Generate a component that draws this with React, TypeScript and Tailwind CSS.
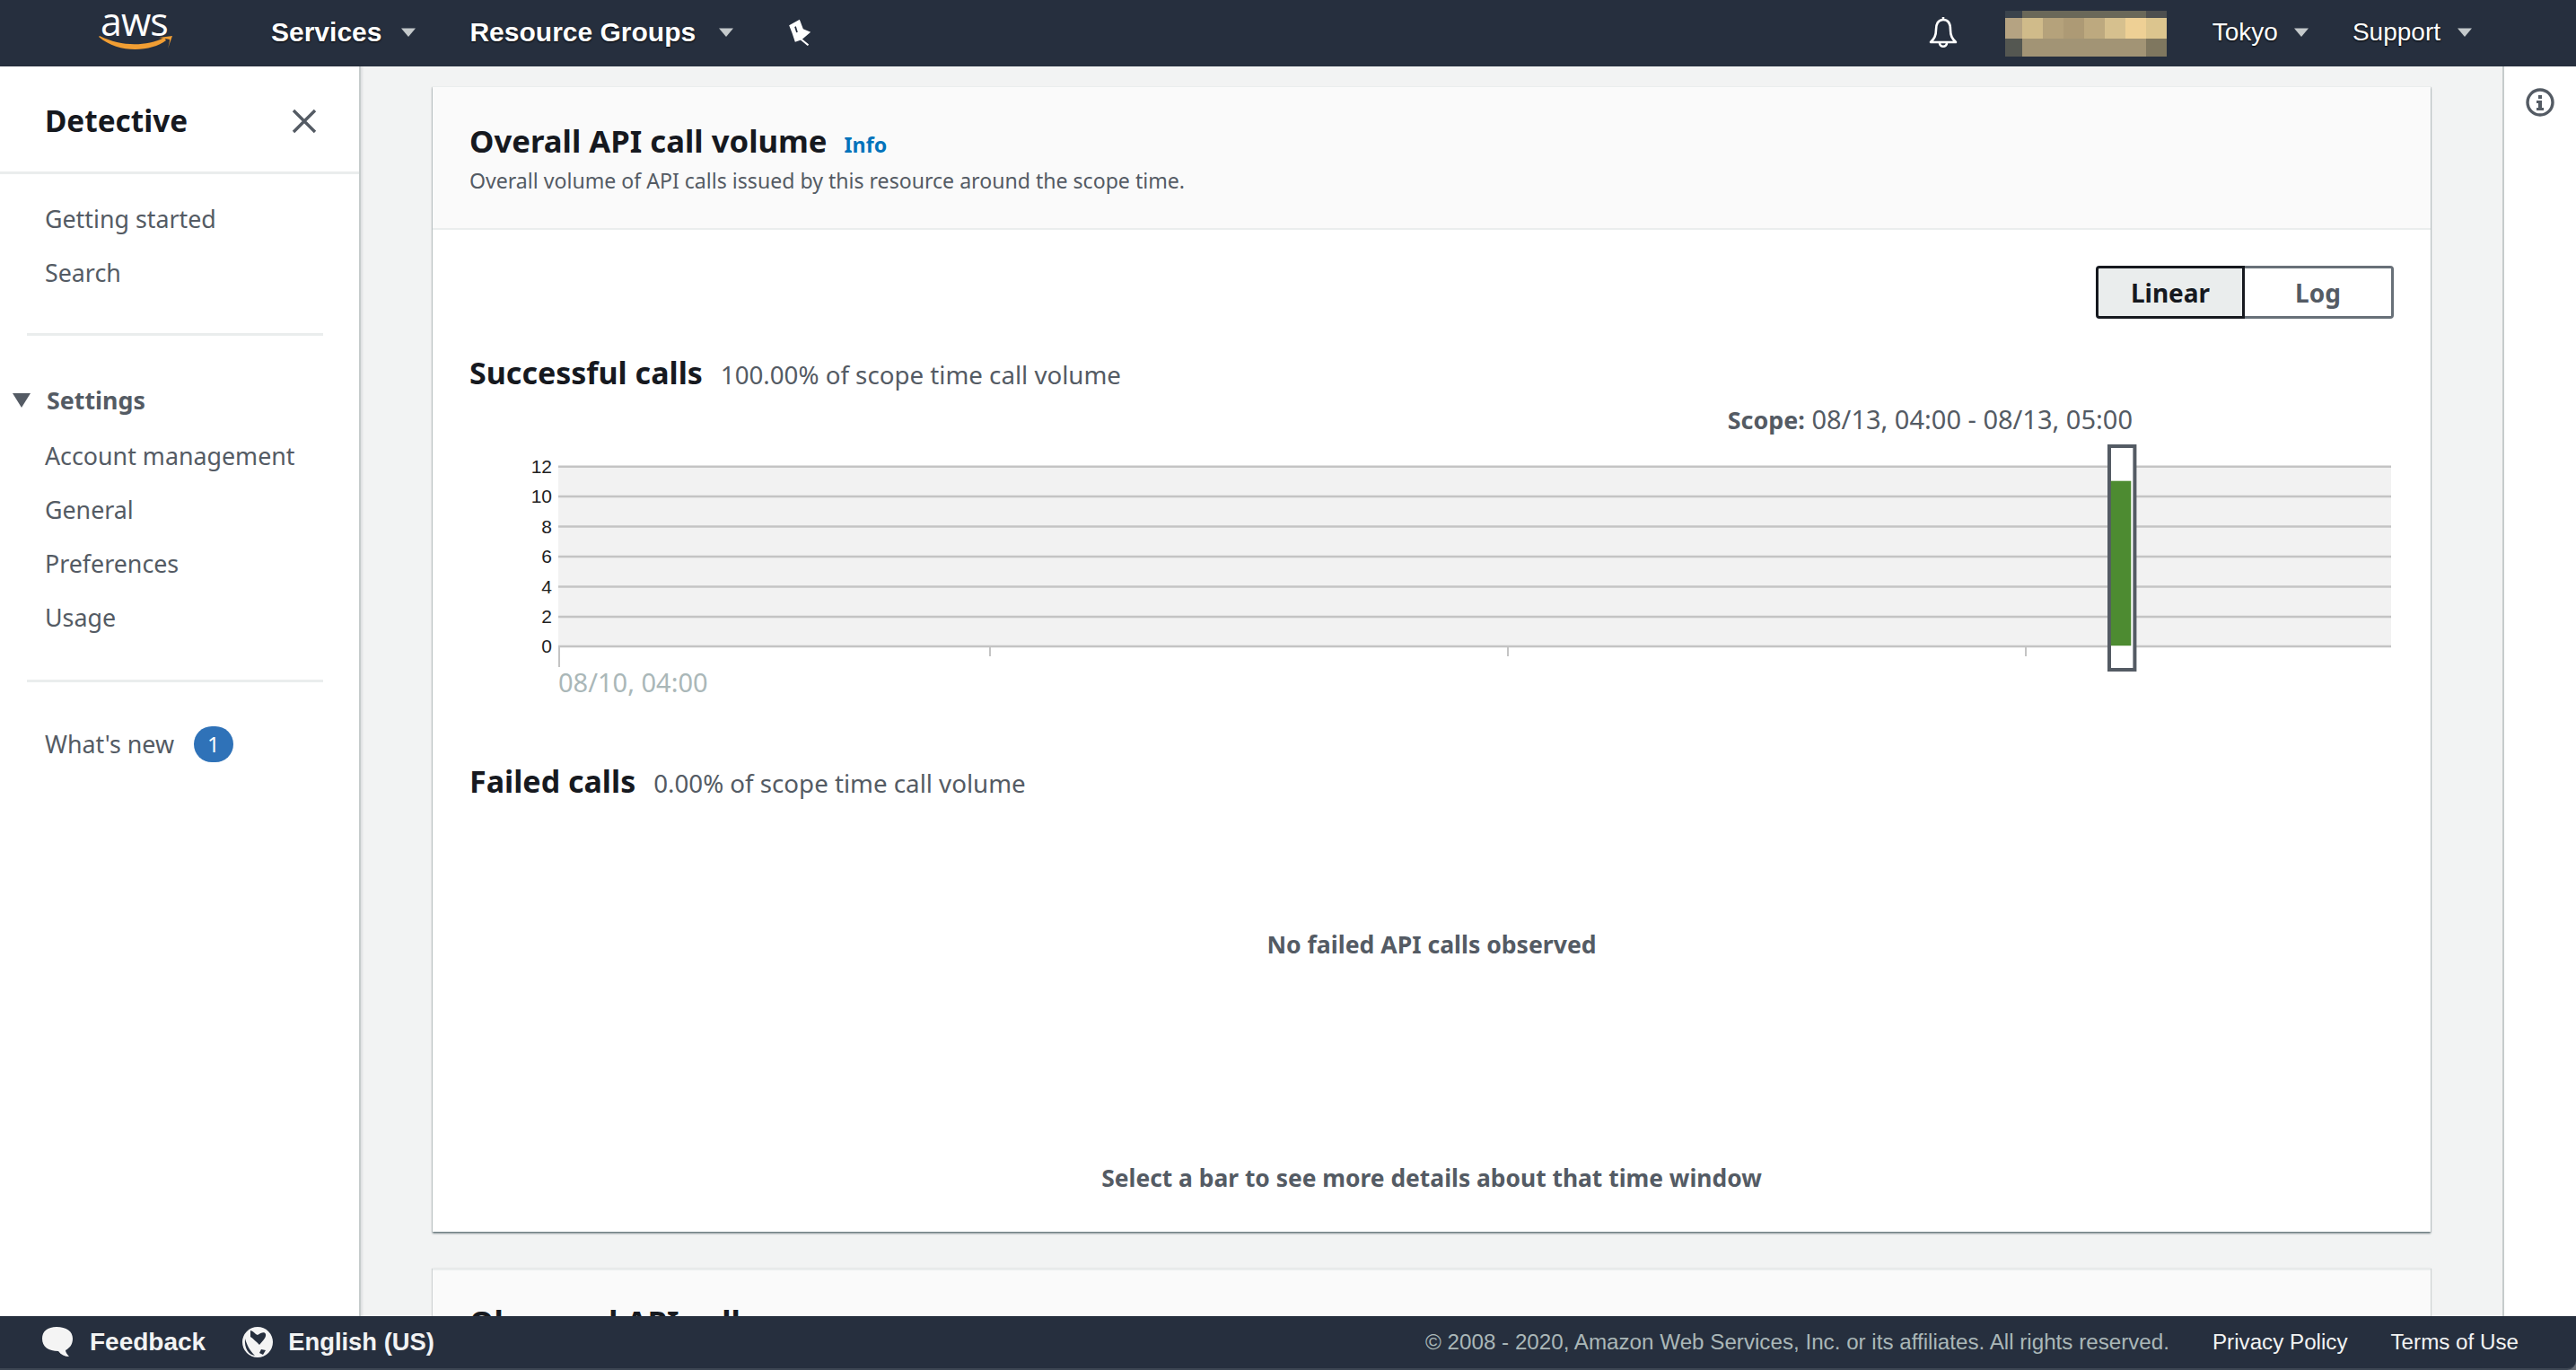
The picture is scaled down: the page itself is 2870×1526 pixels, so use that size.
const body = '"Noto Sans", sans-serif';
const head = '"Liberation Sans", Arial, sans-serif';

function Caret() {
  return (
    <svg width="18" height="12" viewBox="0 0 18 12" className="block">
      <path d="M1 1.5 H17 L9 11 Z" fill="#c4c9cb" />
    </svg>
  );
}

const mosaic = [
  ['#3a434c', '#6a6859', '#6a6859', '#6a6859', '#6a6859', '#6a6859', '#6a6859', '#4d4f4f'],
  ['#b5a382', '#d0bb8a', '#b5a27b', '#ad9a75', '#bda97f', '#d6c08e', '#eed095', '#dcc58e'],
  ['#545751', '#a29475', '#a29475', '#a29475', '#a29475', '#a29475', '#a29475', '#7f775f'],
];

function Mosaic() {
  const xs = [0, 19, 42, 65, 88, 111, 134, 157];
  const ws = [19, 23, 23, 23, 23, 23, 23, 23];
  const ys = [0, 8, 31];
  const hs = [8, 23, 20];
  return (
    <svg width="180" height="51" viewBox="0 0 180 51" className="block mt-[3px]">
      {mosaic.map((row, r) =>
        row.map((c, i) => <rect key={`${r}-${i}`} x={xs[i]} y={ys[r]} width={ws[i]} height={hs[r]} fill={c} />)
      )}
    </svg>
  );
}

function Header() {
  return (
    <header className="h-[74px] shrink-0 pb-[3px] bg-[#262f3e] flex items-center text-white text-[30px] font-bold relative" style={{ fontFamily: head }}>
      <div className="relative w-[84px] h-[60px] ml-[110px] mt-[3px]">
        <span className="absolute left-[2px] top-[-5px] text-[43px] font-normal leading-[44px] tracking-[-1px]" style={{ fontFamily: '"Open Sans", sans-serif' }}>aws</span>
        <svg width="84" height="18" viewBox="0 0 84 18" className="absolute left-0 top-[33px] overflow-visible">
          <path d="M0 1 C22 20 58 18 75 5 L73 2 C52 12 25 12 1 0 Z" fill="#f19e33" />
          <path d="M67 2 L82 0 L77 14 C78 10 79 7 79 4 C76 3 71 3 67 2 Z" fill="#f19e33" />
        </svg>
      </div>
      <span className="ml-[108px] [text-shadow:0_1px_2px_#000]">Services</span>
      <span className="ml-[21px]"><Caret /></span>
      <span className="ml-[59px] [text-shadow:0_1px_2px_#000]">Resource Groups</span>
      <span className="ml-[25px]"><Caret /></span>
      <svg width="27" height="30" viewBox="55 28 80 90" className="ml-[60px] block">
        <path fillRule="evenodd" d="M58 50 L93 30 L105 62 L130 72 L100 98 L78 105 L68 75 Z M76 55 L82 74 L87 72 L81 53 Z" fill="#fff" />
        <path d="M98 96 L122 116" stroke="#fff" strokeWidth="6" />
      </svg>
      <div className="flex-1" />
      <svg width="34" height="36" viewBox="0 0 34 36" className="block mr-[52px]">
        <path d="M17 4 C23 4 25 9 25 15 C25 22 27 25 31 29 H3 C7 25 9 22 9 15 C9 9 11 4 17 4 Z M17 1 V4 M13 30 C13 35 21 35 21 30" fill="none" stroke="#fff" strokeWidth="2.6" strokeLinejoin="round" />
      </svg>
      <Mosaic />
      <span className="ml-[51px] font-normal text-[28px] [text-shadow:0_1px_2px_#000]">Tokyo</span>
      <span className="ml-[17px]"><Caret /></span>
      <span className="ml-[48px] font-normal text-[28px] [text-shadow:0_1px_2px_#000]">Support</span>
      <span className="ml-[18px] mr-[115px]"><Caret /></span>
    </header>
  );
}

function NavItem({ children }: { children: React.ReactNode }) {
  return <div className="h-[60px] flex items-center pl-[50px] text-[26.8px] text-[#545b64]">{children}</div>;
}

function Sidebar() {
  return (
    <aside className="w-[402px] shrink-0 bg-white border-r-2 border-[#c6cccc] [box-shadow:2px_0_2px_rgba(0,28,36,0.08)] z-10">
      <div className="h-[120px] border-b-[3px] border-[#eaeded] pl-[50px] pr-[47px] pt-[4px] flex items-center justify-between">
        <span className="text-[33.3px] font-bold text-[#16191f]">Detective</span>
        <svg width="28" height="28" viewBox="0 0 28 28" className="block">
          <path d="M2 2 L26 26 M26 2 L2 26" stroke="#545b64" strokeWidth="3.4" />
        </svg>
      </div>
      <div className="pt-[20px]">
        <NavItem>Getting started</NavItem>
        <NavItem>Search</NavItem>
      </div>
      <div className="mt-[37px] mx-[30px] w-[330px] h-[3px] bg-[#eaeded]" />
      <div className="mt-[52px] h-[40px] flex items-center pl-[14px] text-[26.8px] font-bold text-[#545b64]">
        <svg width="20" height="16" viewBox="0 0 20 16" className="block mr-[18px]"><path d="M0 0 H20 L10 16 Z" fill="#545b64" /></svg>
        Settings
      </div>
      <div className="mt-[12px]">
        <NavItem>Account management</NavItem>
        <NavItem>General</NavItem>
        <NavItem>Preferences</NavItem>
        <NavItem>Usage</NavItem>
      </div>
      <div className="mt-[39px] mx-[30px] w-[330px] h-[3px] bg-[#eaeded]" />
      <div className="mt-[39px] h-[60px] flex items-center pl-[50px] text-[26.8px] text-[#545b64]">
        What's new
        <span className="ml-[22px] w-[44px] h-[40px] rounded-full bg-[#2f72b8] text-white text-[24px] flex items-center justify-center">1</span>
      </div>
    </aside>
  );
}

function Chart() {
  const ys = [28.7, 62, 95.5, 129, 162.5, 196, 229];
  const labels = ['12', '10', '8', '6', '4', '2', '0'];
  return (
    <svg width="2144" height="290" viewBox="0 0 2144 290" className="block mt-[3px]">
      <rect x="99" y="28" width="2042" height="201" fill="#f2f2f2" />
      {ys.map((y, i) => (
        <g key={y}>
          <line x1="99" x2="2141" y1={y} y2={y} stroke="#c4c4c4" strokeWidth="2.4" />
          <text x="92" y={y + 7} textAnchor="end" fontSize="21" fill="#222" style={{ fontFamily: head }}>{labels[i]}</text>
        </g>
      ))}
      <line x1="100" x2="100" y1="229" y2="252" stroke="#c4c4c4" strokeWidth="2" />
      {[580, 1157, 1734].map((x) => (
        <line key={x} x1={x} x2={x} y1="229" y2="240" stroke="#c4c4c4" strokeWidth="2" />
      ))}
      <rect x="1827" y="6" width="28.4" height="249" fill="#fff" stroke="#545b64" strokeWidth="4" />
      <rect x="1828.8" y="44.7" width="22.5" height="183.5" fill="#4d8b31" />
      <text x="99" y="280" fontSize="29" fill="#aab7b8" style={{ fontFamily: body }}>08/10, 04:00</text>
    </svg>
  );
}

function OverallCard() {
  return (
    <section className="bg-white [box-shadow:0_2px_2px_rgba(0,28,36,0.45),1px_1px_1px_rgba(0,28,36,0.1),-1px_1px_1px_rgba(0,28,36,0.1)] border-t border-[#eaeded]">
      <div className="h-[159px] bg-[#fafafa] border-b-2 border-[#eaeded] px-[41px] pt-[35px]">
        <div className="flex items-baseline">
          <h2 className="text-[34.7px] leading-[50px] font-bold text-[#16191f]">Overall API call volume</h2>
          <span className="ml-[19px] text-[23.2px] font-bold text-[#0073bb]">Info</span>
        </div>
        <p className="text-[23.1px] leading-[36px] text-[#545b64] mt-[1px]">Overall volume of API calls issued by this resource around the scope time.</p>
      </div>
      <div className="px-[41px] h-[1116px]">
        <div className="pt-[40px] flex justify-end text-[28px] font-bold">
          <div className="w-[166px] h-[59px] bg-[#eaeded] border-[3px] border-[#16191f] rounded-l-[4px] flex items-center justify-center text-[#16191f]">Linear</div>
          <div className="w-[166px] h-[59px] border-[3px] border-l-0 border-[#687078] rounded-r-[4px] flex items-center justify-center text-[#545b64]">Log</div>
        </div>
        <div className="mt-[36px] flex items-baseline">
          <h3 className="text-[34px] leading-[48px] font-bold text-[#16191f]">Successful calls</h3>
          <span className="ml-[20px] text-[27.7px] text-[#545b64]">100.00% of scope time call volume</span>
        </div>
        <div className="mt-[8px] pr-[291px] text-right text-[29px] leading-[40px] text-[#545b64]">
          <b className="text-[26.9px]">Scope:</b> 08/13, 04:00 - 08/13, 05:00
        </div>
        <Chart />
        <div className="mt-[65px] flex items-baseline">
          <h3 className="text-[34px] leading-[48px] font-bold text-[#16191f]">Failed calls</h3>
          <span className="ml-[20px] text-[27.7px] text-[#545b64]">0.00% of scope time call volume</span>
        </div>
        <div className="mt-[138px] text-center text-[26.6px] leading-[40px] font-bold text-[#545b64]">No failed API calls observed</div>
        <div className="mt-[220px] text-center text-[26.4px] leading-[40px] font-bold text-[#545b64]">Select a bar to see more details about that time window</div>
      </div>
    </section>
  );
}

function Footer() {
  return (
    <footer className="h-[60px] shrink-0 bg-[#262f3e] border-b-2 border-[#3d4653] rounded-br-[10px] flex items-center text-[28px] text-[#f2f3f3] z-20" style={{ fontFamily: head }}>
      <svg width="36" height="34" viewBox="0 0 36 34" className="block ml-[46px]">
        <path d="M17 0 C28 0 35 5 35 13 C35 20 31 24 27 26 C27 28 29 31 31 33 C26 33 22 31 19 27 C8 27 1 22 1 13 C1 5 7 0 17 0 Z" fill="#f4f4f4" />
      </svg>
      <span className="ml-[18px] font-bold">Feedback</span>
      <svg width="34" height="34" viewBox="0 0 34 34" className="block ml-[41px]">
        <circle cx="17" cy="17" r="17" fill="#f4f4f4" />
        <path d="M9 4 C13 5 14 8 17 9 C21 6 25 5 26 8 C27 12 22 16 19 20 C16 17 12 13 9 11 Z M21 25 L26 26 L23 31 L19 29 Z M3 13 C5 20 8 26 14 32 C7 31 2 24 3 13 Z" fill="#262f3e" />
      </svg>
      <span className="ml-[17px] font-bold text-[27.4px]">English (US)</span>
      <div className="flex-1" />
      <span className="text-[24.2px] text-[#aab7b8]">© 2008 - 2020, Amazon Web Services, Inc. or its affiliates. All rights reserved.</span>
      <span className="ml-[48px] text-[24.2px]">Privacy Policy</span>
      <span className="ml-[48px] mr-[64px] text-[24.2px]">Terms of Use</span>
    </footer>
  );
}

export default function App() {
  return (
    <div className="w-[2870px] h-[1526px] flex flex-col overflow-hidden bg-[#6b7078]" style={{ fontFamily: body }}>
      <Header />
      <div className="flex-1 min-h-0 flex bg-[#f2f3f3]">
        <Sidebar />
        <main className="flex-1 min-w-0 overflow-hidden pl-[80px] pr-[80px] pt-[22px]">
          <OverallCard />
          <section className="mt-[41px] bg-[#fafafa] border-t-2 border-[#eaeded] [box-shadow:1px_0_1px_rgba(0,28,36,0.15),-1px_0_1px_rgba(0,28,36,0.15)] px-[41px] pt-[32px] h-[200px]">
            <h2 className="text-[34.7px] leading-[50px] font-bold text-[#16191f]">Observed API calls</h2>
          </section>
        </main>
        <aside className="w-[82px] shrink-0 bg-white border-l-2 border-[#c6cccc] flex justify-center pt-[24px]">
          <svg width="32" height="32" viewBox="0 0 32 32" className="block">
            <circle cx="16" cy="16" r="14" fill="none" stroke="#545b64" strokeWidth="3.4" />
            <rect x="14" y="8" width="4" height="4" fill="#545b64" />
            <path d="M12 14 H18 V22 H20 V25 H12 V22 H14 V17 H12 Z" fill="#545b64" />
          </svg>
        </aside>
      </div>
      <Footer />
    </div>
  );
}
